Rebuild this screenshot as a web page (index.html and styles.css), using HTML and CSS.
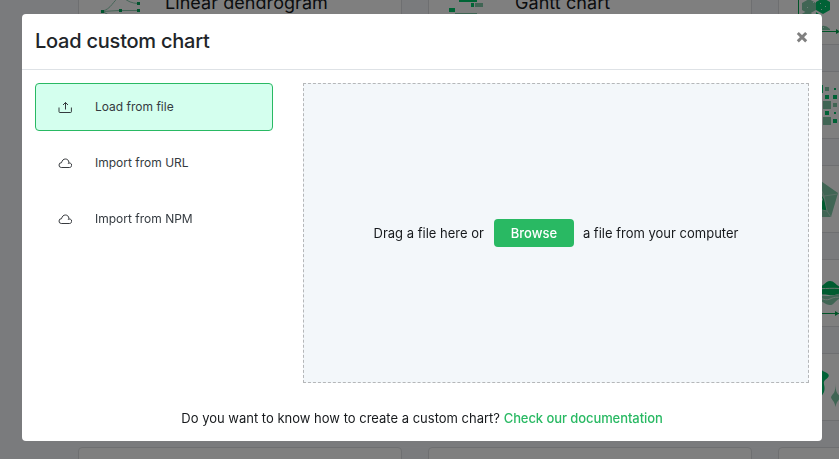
FILE: index.html
```html
<!DOCTYPE html>
<html lang="en">
<head>
<meta charset="utf-8">
<title>Load custom chart</title>
<link rel="stylesheet" href="styles.css">
</head>
<body>
<main class="gallery">
  <div class="card">
    <svg class="thumb" width="87" height="68"><g fill="none" stroke="#8ccbb0"><path d="M24 34C33 33 36 22 41 21M46 21Q51 26 60 26.500M24 34.500L41 33.500H60M24 34L34 40"/></g><path fill="#00a85c" d="M23 33h3v3h-3zM41 32h3v3h-3zM59 32h3v3h-3zM59 25h3v3h-3z"/></svg>
    <h2 class="name">Linear dendrogram</h2>
  </div>
  <div class="card">
    <svg class="thumb" width="87" height="68"><g fill="#00c86a"><path d="M31 22h18v3H31zM43 26h3v4h-3zM21 31h6v4h-6z"/></g><path fill="#80cba9" d="M47 26h8v4h-8zM27 36h22v2H27z"/></svg>
    <h2 class="name">Gantt chart</h2>
  </div>
  <div class="card">
    <svg class="thumb" width="87" height="68"><path stroke="#00a850" d="M20.500 0V55M44 54.500H66"/><path fill="#00a850" d="M58 52l4 2.500-4 2.500z"/><path fill="#80cba9" d="M31 22l7 4v7l-7 4-7-4v-7zM29 34l7 4v8l-7 4-7-4v-8zM39 53q6-8 13-1v1H39z"/><path fill="#00c46c" d="M45 21l7 4v8l-7 4-7-4v-8zM38 35l6 4v8h-7z"/><path fill="#d8fff0" d="M35 25h1v1h-1zM29 30h1v1h-1zM42 26h1v1h-1zM47 29h1v1h-1zM43 32h1v1h-1zM45 50h1v1h-1z"/></svg>
  </div>
  <div class="card"></div><div class="card"></div>
  <div class="card">
    <svg class="thumb" width="87" height="68"><path fill="#80cba9" d="M47 16h4v4h-4zM45 30h8v8h-8zM55 32h4v4h-4zM45 46h8v8h-8z"/><path fill="#00c46c" d="M42 14h3v8h-3zM56 17h2v2h-2zM47 24h4v4h-4zM55 24h4v4h-4zM47 40h4v4h-4zM56 41h2v2h-2zM55 48h4v4h-4z"/></svg>
  </div>
  <div class="card"></div><div class="card"></div>
  <div class="card">
    <svg class="thumb" width="87" height="68"><path fill="#80cba9" d="M40 14l20 14-7 24H40z"/><path fill="#00b860" d="M38 28l8 5 3 13-10-1z"/><path fill="none" stroke="#b5ddca" d="M40 17l6 14 14-2M46 31l-8-4M46 31l3 15 4 6M49 46l-10-2M46 31l-6 14"/></svg>
  </div>
  <div class="card"></div><div class="card"></div>
  <div class="card">
    <svg class="thumb" width="87" height="68"><path fill="#00b860" d="M30 28c15 4 16-6 22-6s6 7 16 7v4c-10 2-12 4-17 3s-8 0-20-1z"/><path fill="#80cba9" d="M30 36c9-1 13 1 20 1s9-3 17-2v4c-9-1-10 7-15 7s-9-7-22-6z"/><path fill="none" stroke="#d8eee2" d="M32 29c10 2 20-1 34 1M32 38c8-2 14 5 20 2s8-1 14-2"/><path stroke="#00a850" d="M30 54.500h36"/><path fill="#00a850" d="M57 52l4 2.500-4 2.500z"/></svg>
  </div>
  <div class="card"></div><div class="card"></div>
  <div class="card">
    <svg class="thumb" width="87" height="68"><path fill="#00c46c" d="M40 14c5 4 3 3 7 5 6 3 4 5 0 8-3 3 1 6-1 12l-4 7z"/><path fill="#80cba9" d="M57.500 30c0 10 2 10 4 13 2 3-3 4-4 11-1-7-6-8-4-11 2-3 4-3 4-13z"/></svg>
  </div>
  <div class="card"></div><div class="card"></div><div class="card"></div>
</main>
<div class="backdrop">
  <section class="modal" role="dialog">
    <header class="head">
      <h1 class="title">Load custom chart</h1>
      <button class="close" aria-label="Close"><svg width="12" height="12"><path d="M1.800 2l8.400 8.400M10.200 2L1.800 10.400" stroke="#808080" stroke-width="2.900"/></svg></button>
    </header>
    <div class="content">
      <nav class="sources">
        <a class="source active"><svg class="icon" width="14" height="14" viewBox="0 0 14 14"><path d="M1 7.500v4.200q0 .8 .8 .8h10.800q.8 0 .8-.8V7.500M7.500 9.500V2.500M5 5L7.500 2.500 10 5"/></svg>Load from file</a>
        <a class="source"><svg class="icon" width="14" height="14" viewBox="0 0 14 14"><path d="M3.300 11.500a2.400 2.400 0 0 1 .2-4.800C4.200 4.200 5.500 3 7.400 3s3.300 1.300 3.500 3.200c-.1.600-.3.900-.6 1.200.8-.8 3.400-.4 3.400 1.800 0 1.400-1 2.300-2.300 2.300z"/></svg>Import from URL</a>
        <a class="source"><svg class="icon" width="14" height="14" viewBox="0 0 14 14"><path d="M3.300 11.500a2.400 2.400 0 0 1 .2-4.800C4.200 4.200 5.500 3 7.400 3s3.300 1.300 3.500 3.200c-.1.600-.3.900-.6 1.200.8-.8 3.400-.4 3.400 1.800 0 1.400-1 2.300-2.300 2.300z"/></svg>Import from NPM</a>
      </nav>
      <div class="drop"><span>Drag a file here or</span><button class="browse">Browse</button><span class="after">a file from your computer</span></div>
    </div>
    <footer class="foot">Do you want to know how to create a custom chart? <a class="link">Check our documentation</a></footer>
  </section>
</div>
</body>
</html>
```
FILE: styles.css
```css
* { box-sizing: border-box; }
body {
  margin: 0;
  height: 459px;
  overflow: hidden;
  background: #f5f7fb;
  color: #16191c;
  font: 13px/20px Inter, sans-serif;
}
h1, h2 { margin: 0; font-weight: 500; }
.gallery {
  display: grid;
  grid-template-columns: repeat(3, 324px);
  grid-auto-rows: 68px;
  gap: 26px;
  margin: -23px 0 0 78px;
}
.card {
  display: flex;
  align-items: flex-start;
  background: #fff;
  border: 1px solid #dddfe2;
  border-radius: 4px;
}
.thumb { margin: -1px 0 0 -1px; flex: none; }
.name { margin: 13px 0 0; font-size: 18px; font-weight: 400; line-height: 24px; letter-spacing: .06px; }
.backdrop {
  position: fixed;
  inset: 0;
  padding: 14px 17px 18px 22px;
  background: rgba(0, 0, 0, .5);
}
.modal {
  display: flex;
  flex-direction: column;
  width: 800px;
  height: 427px;
  background: #fff;
  border-radius: 4px;
}
.head {
  display: flex;
  justify-content: space-between;
  align-items: flex-start;
  height: 56px;
  padding: 12px 14px 0 13px;
  border-bottom: 1px solid #dee2e6;
}
.title { color: #212529; font-size: 20px; line-height: 30px; letter-spacing: -.23px; }
.close { display: flex; margin-top: 5px; padding: 0; border: 0; background: none; }
.content { display: flex; justify-content: space-between; padding: 13px 13px 0; }
.sources { display: flex; flex-direction: column; gap: 8px; width: 238px; }
.source {
  display: flex;
  align-items: center;
  gap: 23px;
  height: 48px;
  padding-left: 22px;
  border: 1px solid transparent;
  border-radius: 4px;
  color: #343a40;
  font-size: 12px;
}
.active { background: #d4ffee; border-color: #29b963; }
.icon { fill: none; stroke: #212529; stroke-width: .9; }
.drop {
  display: flex;
  align-items: center;
  justify-content: center;
  gap: 10px;
  width: 506px;
  height: 300px;
  background: #f3f7fa;
  border: 1px dashed #b5b7b9;
}
.after { margin-left: -1px; }
.browse {
  width: 80px;
  height: 28px;
  padding: 0;
  border: 0;
  border-radius: 4px;
  background: #29b963;
  color: #fff;
  font: 500 13px/20px Inter, sans-serif;
}
.foot { margin-top: 25px; text-align: center; }
.link { color: #29b963; font-weight: 500; letter-spacing: -.08px; }
```
